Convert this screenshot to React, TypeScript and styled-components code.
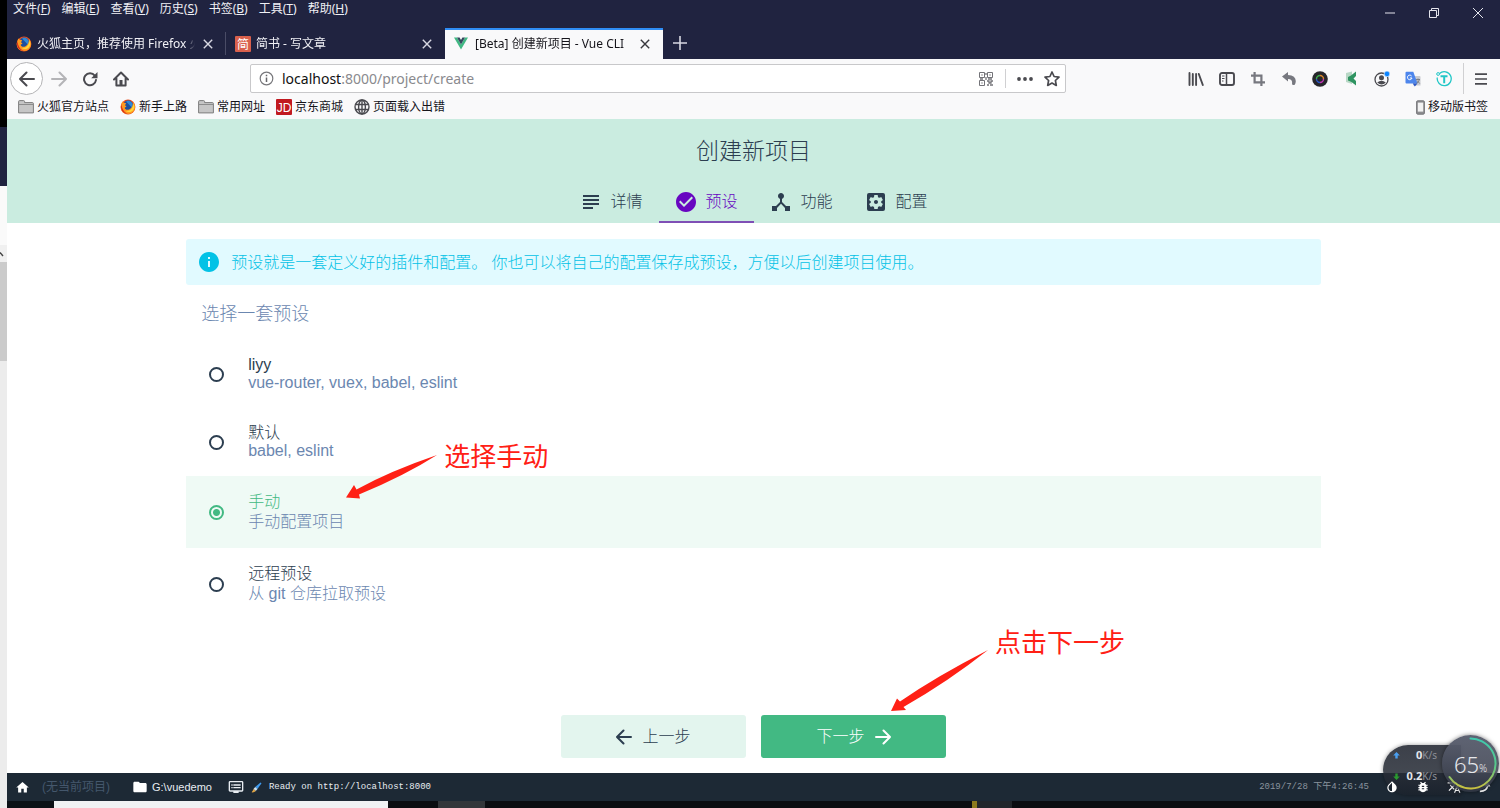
import React from 'react';
import styled, { createGlobalStyle, css } from 'styled-components';
import {
  MdSubject,
  MdCheckCircle,
  MdDeviceHub,
  MdSettingsApplications,
  MdInfo,
  MdHome,
  MdFolder,
  MdDvr,
  MdInvertColors,
  MdBugReport,
  MdTranslate,
} from 'react-icons/md';

const GlobalStyle = createGlobalStyle`
  * { box-sizing: border-box; }
  body {
    margin: 0;
    background: #fff;
    font-family: "Liberation Sans", "Noto Sans CJK SC", sans-serif;
    color: #2c3e50;
  }
  button {
    border: 0;
    padding: 0;
    margin: 0;
    background: none;
    font: inherit;
    color: inherit;
    cursor: pointer;
  }
  a { color: inherit; text-decoration: none; }
`;

/* ---------- shell ---------- */

const Desktop = styled.div`
  display: flex;
  min-height: 100vh;
`;

const BackWindow = styled.div`
  display: flex;
  flex-direction: column;
  flex: 0 0 7px;
  background: #ececec;
`;

const Band = styled.div<{ $h: number; $color: string }>`
  height: ${(p) => p.$h}px;
  background: ${(p) => p.$color};
`;

const ScrollUp = styled.div`
  display: flex;
  align-items: center;
  height: 17px;
  background: #f0f0f0;
`;

const Browser = styled.div`
  display: flex;
  flex-direction: column;
  flex: 1;
  min-width: 0;
`;

/* ---------- browser chrome ---------- */

const chromeFont = css`
  font-family: "Noto Sans", "Noto Sans CJK SC", sans-serif;
  font-size: 12px;
  line-height: 16px;
`;

const TitleBar = styled.header`
  background: #202340;
  color: #f0f0f5;
  ${chromeFont}
`;

const MenuBar = styled.div`
  display: flex;
  justify-content: space-between;
  align-items: flex-start;
  height: 28px;
`;

const Menus = styled.nav`
  display: flex;
  gap: 11px;
  padding: 1px 0 0 6px;
`;

const WindowControls = styled.div`
  display: flex;
`;

const ControlButton = styled.button`
  display: flex;
  align-items: center;
  justify-content: center;
  width: 44px;
  height: 26px;
`;

const TabStrip = styled.div`
  display: flex;
  height: 31px;
`;

const Tab = styled.div<{ $active?: boolean }>`
  display: flex;
  align-items: center;
  gap: 5px;
  width: ${(p) => (p.$active ? 218 : 219)}px;
  padding: 0 10px 2px 9px;
  border-top: 2px solid ${(p) => (p.$active ? '#2f8df5' : 'transparent')};
  background: ${(p) => (p.$active ? '#f9f9fa' : 'transparent')};
  color: ${(p) => (p.$active ? '#15141a' : '#f0f0f5')};
`;

const TabDivider = styled.div`
  align-self: center;
  width: 1px;
  height: 23px;
  margin-left: -1px;
  background: #4a4c66;
`;

const TabTitle = styled.span<{ $wide?: boolean }>`
  flex: 1;
  margin-left: ${(p) => (p.$wide ? 2 : 0)}px;
  overflow: hidden;
  white-space: nowrap;
  mask-image: linear-gradient(to right, #000 calc(100% - 10px), transparent);
`;

const IconButton = styled.button<{ $w?: number }>`
  display: flex;
  align-items: center;
  justify-content: center;
  width: ${(p) => p.$w ?? 16}px;
  height: 16px;
  flex: none;
`;

const NewTab = styled(IconButton)`
  align-self: center;
  margin: 0 0 2px 9px;
`;

const NavBar = styled.div`
  display: flex;
  align-items: center;
  height: 39px;
  padding: 0 2px 0 3px;
  background: #f9f9fa;
  color: #4a4a4f;
`;

const NavButtons = styled.div`
  display: flex;
  align-items: center;
  gap: 15px;
`;

const BackButton = styled.button`
  display: flex;
  align-items: center;
  justify-content: center;
  width: 33px;
  height: 33px;
  margin-right: -7px;
  border: 1px solid #b4b4b6;
  border-radius: 50%;
  background: #fff;
`;

const UrlBar = styled.div`
  display: flex;
  align-items: center;
  flex: 1;
  height: 29px;
  margin: 0 122px 0 121px;
  padding: 0 5px 0 8px;
  border: 1px solid #c8c8ca;
  border-radius: 2px;
  background: #fff;
`;

const Url = styled.a`
  flex: 1;
  margin-left: 8px;
  font-family: "Noto Sans", sans-serif;
  font-size: 14px;
  line-height: 20px;
  color: #8a8a8e;
  b { font-weight: 400; color: #111; }
`;

const Rule = styled.div<{ $h: number }>`
  width: 1px;
  height: ${(p) => p.$h}px;
  background: #d0d0d2;
`;

const UrlActions = styled.div`
  display: flex;
  align-items: center;
  gap: 11px;
`;

const Extensions = styled.div`
  display: flex;
  align-items: center;
  gap: 15px;
  margin-right: 11px;
`;

const Bookmarks = styled.nav`
  display: flex;
  align-items: center;
  gap: 11px;
  height: 21px;
  padding: 0 12px 3px 11px;
  background: #f9f9fa;
  color: #15141a;
  ${chromeFont}
`;

const Bookmark = styled.a<{ $end?: boolean }>`
  display: flex;
  align-items: center;
  gap: 3px;
  margin-left: ${(p) => (p.$end ? 'auto' : 0)};
  white-space: nowrap;
`;

/* ---------- Vue page ---------- */

const PageHeader = styled.div`
  display: flex;
  flex-direction: column;
  align-items: center;
  height: 104px;
  padding-top: 16px;
  background: #caece0;
`;

const PageTitle = styled.h1`
  margin: 0 0 14px;
  font-size: 23px;
  line-height: 32px;
  font-weight: 300;
`;

const Steps = styled.div`
  display: flex;
  flex: 1;
`;

const Step = styled.button<{ $active?: boolean }>`
  display: flex;
  align-items: center;
  justify-content: center;
  gap: 7px;
  width: 95px;
  border-top: 2px solid transparent;
  border-bottom: 2px solid ${(p) => (p.$active ? '#7f4fb5' : 'transparent')};
  font-size: 16px;
  line-height: 20px;
  font-weight: 300;
  color: ${(p) => (p.$active ? '#6806c1' : '#2c3e50')};
  svg { width: 24px; height: 24px; }
`;

const Page = styled.main`
  display: flex;
  flex-direction: column;
  flex: 1;
  align-items: center;
  padding: 16px 0 15px;
  background: #fff;
`;

const Content = styled.form`
  width: 76%;
`;

const Notice = styled.div`
  display: flex;
  align-items: center;
  gap: 10px;
  height: 46px;
  padding: 0 11px;
  border-radius: 3px;
  background: #e1faff;
  font-size: 16px;
  line-height: 20px;
  font-weight: 300;
  color: #03c2e6;
  svg { width: 24px; height: 24px; flex: none; }
  span { padding-top: 2px; }
`;

const SectionTitle = styled.h2`
  margin: 0;
  padding: 17px 15px 14px;
  font-size: 18px;
  line-height: 24px;
  font-weight: 300;
  color: #6b87b0;
`;

const Preset = styled.div<{ $active?: boolean }>`
  position: relative;
  background: ${(p) => (p.$active ? '#effaf5' : 'transparent')};
`;

const PresetLabel = styled.label`
  display: flex;
  align-items: center;
  gap: 24px;
  padding: 16px 23px;
`;

const Radio = styled.input`
  appearance: none;
  flex: none;
  width: 15px;
  height: 15px;
  margin: 0;
  border: 2px solid #2c3e50;
  border-radius: 50%;
  &:checked {
    border-color: #42b983;
    background: radial-gradient(circle, #42b983 3px, transparent 4px);
  }
`;

const PresetText = styled.span<{ $cjk?: boolean }>`
  display: flex;
  flex-direction: column;
  font-size: 16px;
  line-height: ${(p) => (p.$cjk ? 20 : 18)}px;
  font-weight: 300;
`;

const PresetName = styled.span<{ $active?: boolean }>`
  color: ${(p) => (p.$active ? '#42b983' : '#2c3e50')};
`;

const PresetInfo = styled.span`
  color: #6b87b0;
`;

const Actions = styled.div`
  display: flex;
  gap: 15px;
  margin-top: auto;
  padding-top: 24px;
`;

const ActionSlot = styled.div`
  position: relative;
`;

const ActionButton = styled.button<{ $primary?: boolean }>`
  display: flex;
  align-items: center;
  justify-content: center;
  gap: 10px;
  width: 185px;
  height: 43px;
  border-radius: 3px;
  background: ${(p) => (p.$primary ? '#42b983' : '#e3f5ee')};
  color: ${(p) => (p.$primary ? '#fff' : '#2c3e50')};
  font-size: 16px;
  line-height: 20px;
  font-weight: 300;
`;

const Callout = styled.div<{ $left: number; $top: number }>`
  position: absolute;
  left: ${(p) => p.$left}px;
  top: ${(p) => p.$top}px;
  display: flex;
  gap: 7px;
  font-size: 26px;
  line-height: 32px;
  color: #ff2015;
  white-space: nowrap;
  pointer-events: none;
`;

const CalloutArrow = styled.svg<{ $drop: number }>`
  flex: none;
  margin-top: ${(p) => p.$drop}px;
`;

/* ---------- status bar ---------- */

const StatusBar = styled.footer`
  position: relative;
  display: flex;
  align-items: center;
  height: 28px;
  padding: 0 8px;
  background: #1d2935;
  color: #fff;
  font-size: 12px;
  line-height: 16px;
  svg { flex: none; }
`;

const StatusItem = styled.button<{ $gap: number; $after: number; $dim?: boolean }>`
  display: flex;
  align-items: center;
  gap: ${(p) => p.$gap}px;
  margin-right: ${(p) => p.$after}px;
  white-space: nowrap;
  span {
    font-size: ${(p) => (p.$dim ? 12 : 11)}px;
    color: ${(p) => (p.$dim ? '#44576c' : '#e8edf2')};
  }
`;

const Log = styled.button`
  display: flex;
  align-items: center;
  gap: 7px;
  font-family: "Liberation Mono", monospace;
  font-size: 9px;
  color: #e8edf2;
`;

const Clock = styled.time`
  margin-left: auto;
  margin-right: 16px;
  font-family: "Liberation Mono", "Noto Sans CJK SC", monospace;
  font-size: 9px;
  color: #8a949e;
`;

const StatusIcons = styled.div`
  position: relative;
  z-index: 1;
  display: flex;
  gap: 17px;
`;

const Monitor = styled.aside`
  position: absolute;
  right: 0;
  bottom: 6px;
  width: 117px;
  height: 60px;
  font-family: "Noto Sans", sans-serif;
  color: #e6e8ec;
`;

const Speeds = styled.div`
  display: flex;
  flex-direction: column;
  gap: 5px;
  width: 78px;
  height: 50px;
  margin-top: 10px;
  padding: 2px 24px 0 10px;
  border-radius: 25px 0 0 25px;
  background: linear-gradient(rgba(52, 56, 66, 0.96), rgba(27, 34, 44, 0.8));
  box-shadow: 0 0 4px rgba(0, 0, 0, 0.4);
  font-size: 10px;
  line-height: 16px;
`;

const Speed = styled.div`
  display: flex;
  align-items: center;
  white-space: nowrap;
  svg { margin-right: auto; }
  b { font-size: 11px; }
  span { color: #8d9098; }
`;

const Gauge = styled.div`
  position: absolute;
  z-index: 2;
  right: 1px;
  top: 0;
  display: flex;
  align-items: center;
  justify-content: center;
  width: 57px;
  height: 57px;
  border-radius: 50%;
  background: linear-gradient(rgba(91, 96, 112, 0.98), rgba(50, 55, 68, 0.85));
  box-shadow: 0 0 4px rgba(0, 0, 0, 0.5);
  font-size: 22px;
  font-weight: 300;
  line-height: 30px;
  small { padding-top: 8px; font-size: 10px; }
  svg { position: absolute; inset: 0; }
`;

const Taskbar = styled.div`
  display: flex;
  height: 7px;
  background: #0b0d11;
`;

const TaskSlot = styled.div<{ $w: number; $color: string }>`
  flex: 0 1 ${(p) => p.$w}px;
  background: ${(p) => p.$color};
`;

/* ---------- drawings ---------- */

const Cross = ({ color }: { color: string }) => (
  <svg width="10" height="10" viewBox="0 0 10 10" stroke={color} strokeWidth="1.4" fill="none">
    <path d="M0.8 0.8L9.2 9.2M9.2 0.8L0.8 9.2" />
  </svg>
);

const FirefoxLogo = () => (
  <svg width="16" height="16" viewBox="0 0 16 16">
    <circle cx="8" cy="8" r="7.4" fill="#e8501f" />
    <circle cx="8.2" cy="6.6" r="5" fill="#1e4f9c" />
    <path d="M6 2.4a5 5 0 0 1 6 1.4c1 1.6.8 3.4-.2 4.6z" fill="#2f8ad8" />
    <path d="M13 3c2.400 2.500 2.900 6.600.5 9.500-2.600 3-7.400 3.400-10.500.8C.8 11.500.1 8 1.600 4.600l.6-2.200 1.500 1.400 2.500.4-1.200 2 1.500 1.300-1.800 1.300c.4 2 2.800 2.600 4.800 1.500 2.400-1.200 3.600-4 3.500-7.300z" fill="#ff9a1f" />
    <path d="M13.400 4.600c1.400 2.600 1 5.600-.8 7.200-2 1.700-5 1.600-7 .2 4 .6 7.400-2 7.800-7.400z" fill="#ffd83a" />
    <path d="M1.400 5C.4 8.400 1.200 11.600 3.800 13.600c1.400 1 3 1.500 4.600 1.400C4.400 13.800 1.800 10 1.400 5z" fill="#d6281f" />
  </svg>
);

const SquareLogo = ({ text, color }: { text: string; color: string }) => (
  <svg width="16" height="16" viewBox="0 0 16 16">
    <rect width="16" height="16" rx="1" fill={color} />
    <text x="8" y="12.500" textAnchor="middle" fontSize="12" fill="#fff" fontFamily='"Liberation Sans", "Noto Sans CJK SC", sans-serif'>
      {text}
    </text>
  </svg>
);

const VueLogo = () => (
  <svg width="14" height="13" viewBox="0 0 14 13">
    <path d="M0 .5h3L7 7.400 11 .5h3L7 12.600z" fill="#41b883" />
    <path d="M3 .5h2.600L7 2.900 8.400.5H11L7 7.400z" fill="#35495e" />
  </svg>
);

const FolderMark = () => (
  <svg width="16" height="14" viewBox="0 0 16 14">
    <path d="M.6 12.900V1.600q0-1 1-1h4q.9 0 1 1v1h7.800q1 0 1 1v9.300z" fill="#c6c6c6" stroke="#7d7d7d" />
    <path d="M.6 4.500h14.800" stroke="#8d8d8d" fill="none" />
  </svg>
);

const GlobeMark = () => (
  <svg width="16" height="16" viewBox="0 0 16 16" fill="none" stroke="#4a4a4f" strokeWidth="1.400">
    <circle cx="8" cy="8" r="7" />
    <ellipse cx="8" cy="8" rx="3.400" ry="7" />
    <path d="M8 1v14M1.600 5.500h12.800M1.600 10.500h12.800" />
  </svg>
);

const PhoneMark = () => (
  <svg width="9" height="15" viewBox="0 0 9 15">
    <rect x=".6" y=".8" width="7.800" height="13.400" rx="1.200" fill="#8d8d90" stroke="#77777a" />
    <rect x="1.800" y="2.600" width="5.400" height="9" fill="#f2f2f2" />
  </svg>
);

const ArrowGlyph = ({ flip, color, size = 16 }: { flip?: boolean; color: string; size?: number }) => (
  <svg width={size} height={size} viewBox="0 0 16 16" fill="none" stroke={color} strokeWidth="2" strokeLinecap="round" strokeLinejoin="round">
    <path d={flip ? 'M1 8H15M8.500 1.500L15 8L8.500 14.500' : 'M15 8H1M7.500 1.500L1 8L7.500 14.500'} />
  </svg>
);

const Reload = () => (
  <svg width="16" height="16" viewBox="0 0 16 16">
    <path d="M12.800 4.600A6 6 0 1 0 14 9" fill="none" stroke="#4a4a4f" strokeWidth="2" strokeLinecap="round" />
    <path d="M15.500 1v6.300H9.200z" fill="#4a4a4f" />
  </svg>
);

const HomeGlyph = () => (
  <svg width="16" height="16" viewBox="0 0 16 16">
    <path d="M1 8.500L8 1.500l7 7M3.400 7.500V14.600h9.200V7.500" fill="none" stroke="#4a4a4f" strokeWidth="2" strokeLinecap="round" strokeLinejoin="round" />
    <path d="M6.500 14V9h3v5z" fill="#4a4a4f" />
  </svg>
);

const InfoGlyph = () => (
  <svg width="15" height="15" viewBox="0 0 15 15">
    <circle cx="7.500" cy="7.500" r="6.300" fill="none" stroke="#77777b" strokeWidth="1.200" />
    <path d="M7.500 6.500v4.500M7.500 3.700v1.500" stroke="#66666a" strokeWidth="1.500" />
  </svg>
);

const QrGlyph = () => (
  <svg width="14" height="14" viewBox="0 0 14 14" fill="none" stroke="#737378">
    <path d="M.5.5h5v5h-5zM8.500.5h5v5h-5zM.5 8.500h5v5h-5z" />
    <path d="M2.500 3h1M10.500 3h1M2.500 11h1M7 1v2M7 5v3M1 7h3M9 7h4M8 9h2v2h2v-2h2M8 13h2M11 13h3" strokeWidth="1.300" />
  </svg>
);

const StarGlyph = () => (
  <svg width="16" height="16" viewBox="0 0 16 16">
    <path d="M8 1l2.100 4.500 4.900.6-3.600 3.400.9 4.900L8 12l-4.300 2.400.9-4.900L1 6.100l4.900-.6z" fill="none" stroke="#4a4a4f" strokeWidth="1.700" strokeLinejoin="round" />
  </svg>
);

const Dots = () => (
  <svg width="16" height="4" viewBox="0 0 16 4" fill="#4a4a4f">
    <circle cx="2" cy="2" r="1.900" />
    <circle cx="8" cy="2" r="1.900" />
    <circle cx="14" cy="2" r="1.900" />
  </svg>
);

const LibraryGlyph = () => (
  <svg width="16" height="14" viewBox="0 0 16 14" stroke="#4a4a4f" strokeWidth="1.900" strokeLinecap="round">
    <path d="M1.500 1v12M4.800 2v11M8.100 2v11M10.800 2l4 11" />
  </svg>
);

const SidebarGlyph = () => (
  <svg width="16" height="14" viewBox="0 0 16 14" fill="none" stroke="#4a4a4f">
    <rect x="1" y="1" width="14" height="12" rx="2" strokeWidth="1.900" />
    <path d="M7.500 1v12" strokeWidth="1.500" />
    <path d="M3 4h2.500M3 6.500h2.500M3 9h1.500" />
  </svg>
);

const CropGlyph = () => (
  <svg width="14" height="14" viewBox="0 0 14 14" fill="none" stroke="#77787f" strokeWidth="2.200">
    <path d="M3.600 0v10.400H14M0 3.600H10.400V14" />
  </svg>
);

const UndoGlyph = () => (
  <svg width="14" height="13" viewBox="0 0 14 13">
    <path d="M0 4.600L6 0v3q7.800.4 7.800 6.200 0 2-1.300 3.800-2.300.2-2.500-1 .8-5-4-4.900v2.500z" fill="#77787f" />
  </svg>
);

const LensGlyph = () => (
  <svg width="16" height="16" viewBox="0 0 16 16" fill="none">
    <circle cx="8" cy="8" r="7.800" fill="#26262a" />
    <path d="M4.500 8A3.500 3.500 0 0 1 8 4.500" stroke="#3fae49" strokeWidth="1.400" />
    <path d="M8 4.500A3.500 3.500 0 0 1 11.500 8" stroke="#d8862a" strokeWidth="1.400" />
    <path d="M11.500 8A3.500 3.500 0 0 1 8 11.500" stroke="#c334b8" strokeWidth="1.400" />
    <path d="M8 11.500A3.500 3.500 0 0 1 4.500 8" stroke="#2a55c8" strokeWidth="1.400" />
  </svg>
);

const KiteGlyph = () => (
  <svg width="12" height="15" viewBox="0 0 12 15">
    <path d="M1 2l6-1.500V13L1 11z" fill="#b9d8c6" />
    <path d="M3 6l3-1.500L11 .5v4.500L8.500 7.500l2.500 2.500v4.500L6.500 11 3 9.500z" fill="#2f9461" />
  </svg>
);

const AccountGlyph = () => (
  <svg width="16" height="16" viewBox="0 0 16 16">
    <circle cx="7.500" cy="8.500" r="6.500" fill="none" stroke="#4a4a4f" strokeWidth="1.300" />
    <circle cx="7.500" cy="6.700" r="2.500" fill="#4a4a4f" />
    <path d="M3.200 11.500q4.300-3.600 8.600 0q-4 4-8.600 0z" fill="#4a4a4f" />
    <circle cx="13" cy="2.900" r="2.800" fill="#0a84ff" stroke="#f9f9fa" strokeWidth=".6" />
  </svg>
);

const TranslateLogo = () => (
  <svg width="16" height="16" viewBox="0 0 16 16">
    <path d="M6 5h8.500q1 0 1 1v8.500h-7z" fill="#c9cbd0" />
    <path d="M1.500.8h6.800l4.200 11.700H1.500q-1 0-1-1V1.800q0-1 1-1z" fill="#4d86ec" />
    <path d="M7.800 12.500h4.700l-2.700 3z" fill="#2a56c6" />
    <path d="M6.600 5A2.300 2.300 0 1 0 7 7H4.900" fill="none" stroke="#fff" />
    <path d="M11 8.500h4M13 7.500v1M14.500 8.500q-.8 2.400-3 3.800M12 9.500l2.700 3" fill="none" stroke="#6d7177" strokeWidth=".8" />
  </svg>
);

const TGlyph = () => (
  <svg width="16" height="16" viewBox="0 0 16 16" fill="none" stroke="#22c7c7">
    <path d="M3.600 2.400A7 7 0 1 1 1.300 6.500" strokeWidth="1.300" />
    <circle cx="2.100" cy="3" r="1.400" />
    <path d="M4.500 5.200h7M8.200 5.200v7" strokeWidth="2" />
  </svg>
);

const Hamburger = () => (
  <svg width="12" height="12" viewBox="0 0 12 12" stroke="#4a4a4f" strokeWidth="1.700">
    <path d="M0 1.200h12M0 6h12M0 10.800h12" />
  </svg>
);

const Brush = () => (
  <svg width="11" height="11" viewBox="0 0 11 11">
    <path d="M9.500.5l1 .8L6.500 7 4.200 5z" fill="#3f9bf0" />
    <path d="M4.200 5l2.300 2L4.800 9 2.500 7z" fill="#cfe4f5" />
    <path d="M2.500 7l2.300 2Q3 10.800.6 10.300 1.800 9 2.500 7z" fill="#e0a546" />
  </svg>
);

const ShareArrow = () => (
  <svg width="12" height="12" viewBox="0 0 14 14">
    <path d="M1 12q8 0 9-6.500" fill="none" stroke="#fff" strokeWidth="2" />
    <path d="M6.500 6L10.300 1.500 13.300 6.500z" fill="#fff" />
  </svg>
);

const SpeedArrow = ({ down }: { down?: boolean }) => (
  <svg width="7" height="7" viewBox="0 0 7 7">
    {down ? (
      <path d="M3.500 7L.2 3.600h2.100V.5h2.400v3.100h2.100z" fill="#2a9a2f" />
    ) : (
      <path d="M3.500 0l3.300 3.400H4.700v3.100H2.300V3.400H.2z" fill="#4a9ff0" />
    )}
  </svg>
);

const GaugeArc = () => (
  <svg width="57" height="57" viewBox="0 0 57 57" fill="none">
    <defs>
      <linearGradient id="arc" x1="0" y1="0" x2="0" y2="1">
        <stop offset="0" stopColor="#3fc9ae" />
        <stop offset=".55" stopColor="#58c88a" />
        <stop offset="1" stopColor="#c9c040" />
      </linearGradient>
    </defs>
    <path d="M28.500 3.500A25 25 0 1 1 7.500 42" stroke="url(#arc)" strokeWidth="2" strokeLinecap="round" />
  </svg>
);

/* ---------- data ---------- */

const menus = [
  ['文件', 'F'],
  ['编辑', 'E'],
  ['查看', 'V'],
  ['历史', 'S'],
  ['书签', 'B'],
  ['工具', 'T'],
  ['帮助', 'H'],
];

const bookmarks = [
  { label: '火狐官方站点', icon: <FolderMark /> },
  { label: '新手上路', icon: <FirefoxLogo /> },
  { label: '常用网址', icon: <FolderMark /> },
  { label: '京东商城', icon: <SquareLogo text="JD" color="#c11920" /> },
  { label: '页面载入出错', icon: <GlobeMark /> },
];

const extensions = [
  { label: '书库', icon: <LibraryGlyph /> },
  { label: '侧栏', icon: <SidebarGlyph /> },
  { label: '截图', icon: <CropGlyph /> },
  { label: '撤销', icon: <UndoGlyph /> },
  { label: '取色', icon: <LensGlyph /> },
  { label: '扩展', icon: <KiteGlyph /> },
  { label: '账户', icon: <AccountGlyph /> },
  { label: '翻译', icon: <TranslateLogo /> },
  { label: '工具箱', icon: <TGlyph /> },
];

const steps = [
  { label: '详情', icon: <MdSubject /> },
  { label: '预设', icon: <MdCheckCircle />, active: true },
  { label: '功能', icon: <MdDeviceHub /> },
  { label: '配置', icon: <MdSettingsApplications /> },
];

const presets = [
  { id: 'liyy', name: 'liyy', info: 'vue-router, vuex, babel, eslint' },
  { id: 'default', name: '默认', info: 'babel, eslint' },
  { id: 'manual', name: '手动', info: '手动配置项目', cjk: true, active: true },
  { id: 'remote', name: '远程预设', info: '从 git 仓库拉取预设', cjk: true },
];

export default function App() {
  return (
    <Desktop>
      <GlobalStyle />
      <BackWindow>
        <Band $h={127} $color="#000" />
        <Band $h={59} $color="#202340" />
        <Band $h={59} $color="#fafafa" />
        <ScrollUp>
          <svg width="4" height="6" viewBox="0 0 4 6">
            <path d="M0 1.500L3 5" stroke="#444" strokeWidth="1.400" />
          </svg>
        </ScrollUp>
        <Band $h={99} $color="#cbcbcb" />
      </BackWindow>
      <Browser>
        <TitleBar>
          <MenuBar>
            <Menus>
              {menus.map(([name, key]) => (
                <button key={key}>
                  {name}(<u>{key}</u>)
                </button>
              ))}
            </Menus>
            <WindowControls>
              <ControlButton aria-label="最小化">
                <svg width="10" height="2" viewBox="0 0 10 2"><path d="M0 1h10" stroke="#e4e4ec" /></svg>
              </ControlButton>
              <ControlButton aria-label="还原">
                <svg width="10" height="10" viewBox="0 0 10 10" fill="none" stroke="#e4e4ec">
                  <path d="M.5 2.500h7v7h-7zM2.500 2.500v-2h7v7h-2" />
                </svg>
              </ControlButton>
              <ControlButton aria-label="关闭">
                <svg width="10" height="10" viewBox="0 0 10 10" stroke="#e4e4ec"><path d="M0 0l10 10M10 0L0 10" /></svg>
              </ControlButton>
            </WindowControls>
          </MenuBar>
          <TabStrip>
            <Tab>
              <FirefoxLogo />
              <TabTitle>火狐主页，推荐使用 Firefox 火</TabTitle>
              <IconButton aria-label="关闭标签页"><Cross color="#d8d8e2" /></IconButton>
            </Tab>
            <TabDivider />
            <Tab>
              <SquareLogo text="简" color="#d9604c" />
              <TabTitle>简书 - 写文章</TabTitle>
              <IconButton aria-label="关闭标签页"><Cross color="#d8d8e2" /></IconButton>
            </Tab>
            <Tab $active>
              <VueLogo />
              <TabTitle $wide>[Beta] 创建新项目 - Vue CLI</TabTitle>
              <IconButton aria-label="关闭标签页"><Cross color="#38383d" /></IconButton>
            </Tab>
            <NewTab aria-label="新标签页">
              <svg width="14" height="14" viewBox="0 0 14 14" stroke="#d8d8e2" strokeWidth="1.600"><path d="M7 0v14M0 7h14" /></svg>
            </NewTab>
          </TabStrip>
        </TitleBar>

        <NavBar>
          <NavButtons>
            <BackButton aria-label="后退"><ArrowGlyph color="#4a4a4f" /></BackButton>
            <IconButton aria-label="前进"><ArrowGlyph flip color="#b4b4b7" /></IconButton>
            <IconButton aria-label="刷新"><Reload /></IconButton>
            <IconButton aria-label="主页"><HomeGlyph /></IconButton>
          </NavButtons>
          <UrlBar>
            <InfoGlyph />
            <Url href="#"><b>localhost</b>:8000/project/create</Url>
            <UrlActions>
              <IconButton aria-label="二维码"><QrGlyph /></IconButton>
              <Rule $h={19} />
              <IconButton aria-label="页面操作"><Dots /></IconButton>
              <IconButton aria-label="收藏"><StarGlyph /></IconButton>
            </UrlActions>
          </UrlBar>
          <Extensions>
            {extensions.map((e) => (
              <IconButton key={e.label} aria-label={e.label}>{e.icon}</IconButton>
            ))}
          </Extensions>
          <Rule $h={31} />
          <IconButton aria-label="菜单" $w={34}><Hamburger /></IconButton>
        </NavBar>

        <Bookmarks>
          {bookmarks.map((b) => (
            <Bookmark key={b.label} href="#">{b.icon}{b.label}</Bookmark>
          ))}
          <Bookmark href="#" $end><PhoneMark />移动版书签</Bookmark>
        </Bookmarks>

        <PageHeader>
          <PageTitle>创建新项目</PageTitle>
          <Steps>
            {steps.map((s) => (
              <Step key={s.label} $active={s.active}>{s.icon}{s.label}</Step>
            ))}
          </Steps>
        </PageHeader>

        <Page>
          <Content>
            <Notice>
              <MdInfo />
              <span>预设就是一套定义好的插件和配置。 你也可以将自己的配置保存成预设，方便以后创建项目使用。</span>
            </Notice>
            <SectionTitle>选择一套预设</SectionTitle>
            {presets.map((p) => (
              <Preset key={p.id} $active={p.active}>
                <PresetLabel>
                  <Radio type="radio" name="preset" value={p.id} defaultChecked={p.active} />
                  <PresetText $cjk={p.cjk}>
                    <PresetName $active={p.active}>{p.name}</PresetName>
                    <PresetInfo>{p.info}</PresetInfo>
                  </PresetText>
                </PresetLabel>
                {p.active && (
                  <Callout $left={160} $top={-35}>
                    <CalloutArrow $drop={14} width="91" height="44" viewBox="0 0 91 44">
                      <path d="M0 42.500L8 30L10.500 34.500Q44 16 91 0Q58 21 13 39.500L14 43.500z" fill="#ff2015" />
                    </CalloutArrow>
                    选择手动
                  </Callout>
                )}
              </Preset>
            ))}
          </Content>
          <Actions>
            <ActionButton><ArrowGlyph color="#2c3e50" />上一步</ActionButton>
            <ActionSlot>
              <ActionButton $primary>下一步<ArrowGlyph flip color="#fff" /></ActionButton>
              <Callout $left={130} $top={-88}>
                <CalloutArrow $drop={23} width="97" height="62" viewBox="0 0 97 62">
                  <path d="M0 61L6 48.500L9 51.500Q46 26 97 0Q58 31 12.500 57L15 60z" fill="#ff2015" />
                </CalloutArrow>
                点击下一步
              </Callout>
            </ActionSlot>
          </Actions>
        </Page>

        <StatusBar>
          <StatusItem $gap={12} $after={22} $dim><MdHome size={15} /><span>(无当前项目)</span></StatusItem>
          <StatusItem $gap={4} $after={16}><MdFolder size={16} /><span>G:\vuedemo</span></StatusItem>
          <Log><MdDvr size={16} /><Brush />Ready on http://localhost:8000</Log>
          <Clock>2019/7/28 下午4:26:45</Clock>
          <StatusIcons>
            <IconButton aria-label="切换主题" $w={14}><MdInvertColors size={14} /></IconButton>
            <IconButton aria-label="报告问题" $w={14}><MdBugReport size={14} /></IconButton>
            <IconButton aria-label="语言" $w={14}><MdTranslate size={14} /></IconButton>
            <IconButton aria-label="分享" $w={14}><ShareArrow /></IconButton>
          </StatusIcons>
          <Monitor>
            <Speeds>
              <Speed><SpeedArrow /><b>0</b><span>K/s</span></Speed>
              <Speed><SpeedArrow down /><b>0.2</b><span>K/s</span></Speed>
            </Speeds>
            <Gauge><GaugeArc />65<small>%</small></Gauge>
          </Monitor>
        </StatusBar>
        <Taskbar>
          <TaskSlot $w={47} $color="#0b1116" />
          <TaskSlot $w={334} $color="#f0f2f4" />
          <TaskSlot $w={50} $color="#0b0d11" />
          <TaskSlot $w={47} $color="#33363a" />
          <TaskSlot $w={487} $color="#0b0d11" />
          <TaskSlot $w={5} $color="#8c7a1e" />
          <TaskSlot $w={35} $color="#22262b" />
        </Taskbar>
      </Browser>
    </Desktop>
  );
}
